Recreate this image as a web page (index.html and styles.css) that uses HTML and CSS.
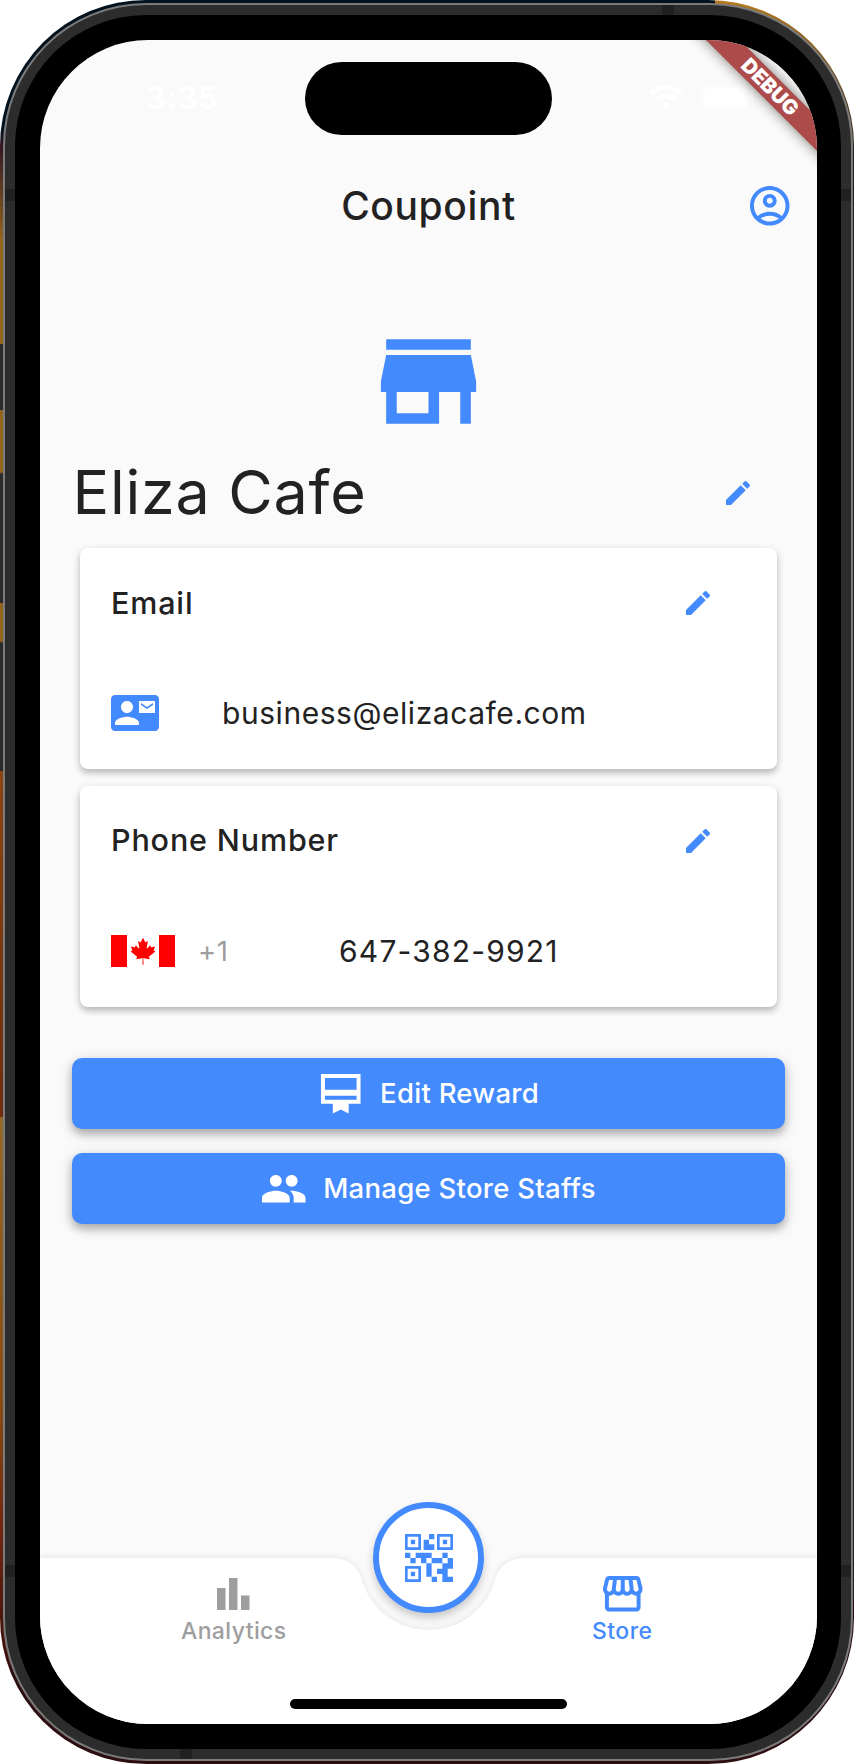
FILE: index.html
```html
<!DOCTYPE html>
<html lang="en">
<head>
<meta charset="utf-8">
<title>Coupoint</title>
<link rel="stylesheet" href="styles.css">
</head>
<body>
<div class="device">
  <div class="rim"><div class="band"><div class="bezel"><div class="screen">
    <header class="status">
      <span class="time">3:35</span>
      <span class="island"></span>
      <span class="signals">
        <svg class="wifi" viewBox="0 0 34 25"><path d="M2 8.500Q17-3.500 32 8.500M8 14.500Q17 7.500 26 14.500" fill="none" stroke="#fff" stroke-width="5"/><path d="M17 24l-5-5q5-4 10 0z" fill="#fff"/></svg>
        <svg class="battery" viewBox="0 0 54 24"><rect x="1" y="1" width="46" height="22" rx="7" fill="none" stroke="#fdfdfd" stroke-width="2"/><rect x="3" y="3" width="42" height="18" rx="5" fill="#fff"/><rect x="49" y="8" width="3" height="8" rx="1.500" fill="#fdfdfd"/></svg>
      </span>
    </header>
    <div class="debug">DEBUG</div>
    <div class="appbar">
      <h1>Coupoint</h1>
      <svg class="icon account" viewBox="0 0 24 24"><path fill-rule="evenodd" d="M12 2C6.480 2 2 6.480 2 12s4.480 10 10 10 10-4.480 10-10S17.520 2 12 2zM7.350 18.500C8.660 17.560 10.260 17 12 17s3.340.560 4.650 1.500C15.340 19.440 13.740 20 12 20s-3.340-.560-4.650-1.500zm10.790-1.380C16.450 15.800 14.320 15 12 15s-4.450.800-6.140 2.120C4.700 15.730 4 13.950 4 12c0-4.420 3.580-8 8-8s8 3.580 8 8c0 1.950-.700 3.730-1.860 5.120z"/><path fill-rule="evenodd" d="M12 6c-1.930 0-3.500 1.570-3.500 3.500S10.070 13 12 13s3.500-1.570 3.500-3.500S13.930 6 12 6zm0 5c-.830 0-1.500-.670-1.500-1.500S11.170 8 12 8s1.500.670 1.500 1.500S12.830 11 12 11z"/></svg>
    </div>
    <main class="content">
      <svg class="hero" viewBox="0 0 24 24"><path d="M20 4H4v2h16V4zm1 10v-2l-1-5H4l-1 5v2h1v6h10v-6h4v6h2v-6h1zm-9 4H6v-4h6v4z"/></svg>
      <div class="name-row">
        <h2>Eliza Cafe</h2>
        <svg class="pencil" viewBox="0 0 24 24"><path d="M3 17.250V21h3.750L17.810 9.940l-3.750-3.750L3 17.250zM20.710 7.040c.390-.390.390-1.020 0-1.410l-2.340-2.340c-.390-.390-1.020-.390-1.410 0l-1.830 1.830 3.750 3.750 1.830-1.830z"/></svg>
      </div>
      <section class="card">
        <div class="card-head">
          <h3>Email</h3>
          <svg class="pencil" viewBox="0 0 24 24"><path d="M3 17.250V21h3.750L17.810 9.940l-3.750-3.750L3 17.250zM20.710 7.040c.390-.390.390-1.020 0-1.410l-2.340-2.340c-.390-.390-1.020-.390-1.410 0l-1.830 1.830 3.750 3.750 1.830-1.830z"/></svg>
        </div>
        <div class="card-row">
          <svg class="contact" viewBox="0 0 24 24"><path d="M21 8V7l-3 2-3-2v1l3 2 3-2zm1-5H2C.900 3 0 3.900 0 5v14c0 1.100.900 2 2 2h20c1.100 0 1.990-.900 1.990-2L24 5c0-1.100-.900-2-2-2zM8 6c1.660 0 3 1.340 3 3s-1.340 3-3 3-3-1.340-3-3 1.340-3 3-3zm6 12H2v-1c0-2 4-3.100 6-3.100s6 1.100 6 3.100v1zm8-6h-8V6h8v6z"/></svg>
          <span class="value">business@elizacafe.com</span>
        </div>
      </section>
      <section class="card">
        <div class="card-head">
          <h3>Phone Number</h3>
          <svg class="pencil" viewBox="0 0 24 24"><path d="M3 17.250V21h3.750L17.810 9.940l-3.750-3.750L3 17.250zM20.710 7.040c.390-.390.390-1.020 0-1.410l-2.340-2.340c-.390-.390-1.020-.390-1.410 0l-1.830 1.830 3.750 3.750 1.830-1.830z"/></svg>
        </div>
        <div class="card-row">
          <svg class="flag" viewBox="0 0 9600 4800"><path fill="#fff" d="M0 0h9600v4800H0z"/><path fill="#f00" d="M0 0h2400v4800H0zM7200 0h2400v4800H7200z"/><path fill="#f00" transform="translate(4800 2400)" d="m-90 2030 45-863a95 95 0 0 0-111-98l-859 151 116-320a65 65 0 0 0-20-73l-941-762 212-99a65 65 0 0 0 34-79l-186-572 542 115a65 65 0 0 0 73-38l105-247 423 454a65 65 0 0 0 111-57l-204-1052 327 189a65 65 0 0 0 91-27l332-652 332 652a65 65 0 0 0 91 27l327-189-204 1052a65 65 0 0 0 111 57l423-454 105 247a65 65 0 0 0 73 38l542-115-186 572a65 65 0 0 0 34 79l212 99-941 762a65 65 0 0 0-20 73l116 320-859-151a95 95 0 0 0-111 98l45 863z"/></svg>
          <span class="code">+1</span>
          <span class="value phone">647-382-9921</span>
        </div>
      </section>
      <div class="actions">
        <button class="action"><svg class="icon" viewBox="0 0 24 24"><path d="M22 2H2v15h6v5l4-2 4 2v-5h6V2zm-2 13H4v-2h16v2zm0-5H4V4h16v6z"/></svg><span>Edit Reward</span></button>
        <button class="action"><svg class="icon" viewBox="0 0 24 24"><path d="M16 11c1.660 0 2.990-1.340 2.990-3S17.660 5 16 5c-1.660 0-3 1.340-3 3s1.340 3 3 3zm-8 0c1.660 0 2.990-1.340 2.990-3S9.660 5 8 5C6.340 5 5 6.340 5 8s1.340 3 3 3zm0 2c-2.330 0-7 1.170-7 3.500V19h14v-2.500c0-2.330-4.670-3.500-7-3.500zm8 0c-.290 0-.620.020-.970.050 1.160.840 1.970 1.970 1.970 3.450V19h6v-2.500c0-2.330-4.670-3.500-7-3.500z"/></svg><span>Manage Store Staffs</span></button>
      </div>
    </main>
    <nav class="nav">
      <svg class="nav-shape" viewBox="0 0 777 167"><path d="M0 0H290C308 0 317 8 321 19A69.500 69.500 0 0 0 456 19C460 8 469 0 487 0H777V167H0z"/></svg>
      <div class="tabs">
        <a class="tab analytics"><svg viewBox="0 0 33 32"><path d="M0 10h8.500v22H0zM12 0h8.500v32H12zM24 17.500h8.500V32H24z"/></svg><span>Analytics</span></a>
        <a class="tab store"><svg viewBox="0 0 24 24"><path d="M21.900 8.890l-1.050-4.370c-.220-.900-1-1.520-1.910-1.520H5.050c-.900 0-1.690.630-1.900 1.520L2.100 8.890c-.240 1.020-.020 2.060.620 2.880.080.110.190.190.280.290V19c0 1.100.900 2 2 2h14c1.100 0 2-.900 2-2v-6.940c.090-.090.200-.180.280-.280.640-.820.870-1.870.620-2.890zm-2.990-3.900l1.050 4.370c.100.420.010.840-.250 1.170-.140.180-.440.470-.940.470-.610 0-1.140-.490-1.210-1.140L16.980 5l1.930-.010zM13 5h1.960l.540 4.520c.050.390-.070.780-.330 1.070-.220.260-.540.410-.950.410-.670 0-1.220-.590-1.220-1.310V5zM8.490 9.520L9.040 5H11v4.690c0 .720-.550 1.310-1.290 1.310-.340 0-.650-.150-.890-.410-.250-.290-.370-.680-.330-1.070zm-4.450-.160L5.050 5h1.970l-.580 4.860c-.080.650-.600 1.140-1.210 1.140-.490 0-.800-.290-.930-.470-.270-.320-.360-.750-.260-1.170zM5 19v-6.030c.080.010.150.030.230.030.870 0 1.660-.360 2.240-.950.600.600 1.400.950 2.310.950.870 0 1.650-.360 2.230-.930.590.570 1.390.930 2.290.930.840 0 1.640-.350 2.240-.950.580.590 1.370.950 2.240.950.080 0 .150-.020.230-.030V19H5z"/></svg><span>Store</span></a>
      </div>
      <div class="fab"><svg viewBox="0 0 18 18"><path fill-rule="evenodd" d="M0 0h6v6H0zM1 1v4h4V1zM12 0h6v6h-6zM13 1v4h4V1zM0 12h6v6H0zM1 13v4h4v-4z"/><path d="M2.200 2.200h1.600v1.600H2.200zM14.200 2.200h1.600v1.600h-1.600zM2.200 14.200h1.600v1.600H2.200zM9 0h2v2H9zM7 2.200h2v1.600h2V6H7zM0 7h2v2H0zM2 9h2v2H2zM4 7h6v2h4v2h-4V9H8v2H6V9H4zM14 7h2v2h-2zM16 9h2v4h-2v2h-4v-2h2v-2h2zM8 11h2v5H8zM10 16h2v2h-2zM14 15h2v1h2v2h-4z"/></svg></div>
      <div class="home"></div>
    </nav>
  </div></div></div></div>
  <div class="seams"><i class="s1"></i><i class="s2"></i><i class="s3"></i><i class="s4"></i><i class="s5"></i><i class="s6"></i></div>
</div>
</body>
</html>
```
FILE: styles.css
```css
* { box-sizing: border-box; }
body { margin: 0; background: #fff; font-family: Inter, "Noto Sans", sans-serif; color: #222; }
h1, h2, h3 { margin: 0; font-weight: 450; line-height: 1; white-space: nowrap; }
svg { display: block; flex: none; fill: #448aff; }

/* phone frame, one nested ring per layer */
.device {
  position: relative; width: 854px; height: 1764px; padding: 3px 1px 3px 3px; border-radius: 146px; overflow: hidden;
  background:
    linear-gradient(#02121f, #02121f) 0 0 / 715px 4px no-repeat,
    linear-gradient(#b67a20, #1c1a18) 715px 0 / 139px 160px no-repeat,
    linear-gradient(90deg, transparent 10px, #2c0d10 10px) 0 1600px / 854px 164px no-repeat,
    linear-gradient(#1a1a1a, #1a1a1a) 844px 0 / 10px 1764px no-repeat,
    linear-gradient(#02121f 130px, #321824 145px, #92651f 240px, #92651f 344px, #2b2b2b 344px, #2b2b2b 410px, #92651f 410px, #92651f 472px, #2b2b2b 474px, #2b2b2b 603px, #92651f 603px, #92651f 641px, #2b2b2b 643px, #2b2b2b 771px, #8a4510 771px, #702c0e 1116px, #94692a 1118px, #8a4c12 1400px, #702610 1530px, #3b100d 1660px);
}
.rim { height: 100%; padding: 2px; border-radius: 143px; background: #7b7b7b; }
.band { height: 100%; padding: 10px; border-radius: 141px; background: #2c2c2c; }
.bezel { height: 100%; padding: 25px 24px 25px 25px; border-radius: 131px; background: #000; }
.screen { position: relative; display: flex; flex-direction: column; height: 1684px; border-radius: 108px; overflow: hidden; background: #fafafa; }
.seams i { position: absolute; width: 10px; height: 12px; background: #202020; }
.seams .s1 { left: 5px; top: 189px; }
.seams .s2 { right: 3px; top: 189px; }
.seams .s3 { left: 5px; top: 1565px; }
.seams .s4 { right: 3px; top: 1565px; }
.seams .s5 { left: 662px; top: 5px; width: 12px; height: 10px; }
.seams .s6 { left: 180px; top: 1749px; width: 12px; height: 10px; }

.status { display: grid; grid-template-columns: 265px 247px 1fr; height: 120px; padding-top: 22px; align-items: start; }
.time { padding: 17px 0 0 106px; font-size: 31px; line-height: 38px; font-weight: 600; letter-spacing: .9px; color: #fff; }
.island { height: 73px; border-radius: 37px; background: #000; }
.signals { display: flex; gap: 18px; padding: 23px 0 0 97px; }
.wifi { width: 34px; height: 25px; }
.battery { width: 54px; height: 24px; }
.debug {
  position: absolute; left: 580px; top: 35px; width: 300px; height: 23.500px; transform: rotate(45deg);
  background: #ad4b4b; box-shadow: 0 0 13px rgba(0,0,0,.5); color: #fff; font-size: 20.500px; font-weight: 900; line-height: 23px; text-align: center;
}

.appbar { display: grid; grid-template-columns: 1fr auto 1fr; align-items: center; height: 92px; padding: 0 24px; }
.appbar h1 { grid-column: 2; font-size: 39px; letter-spacing: .6px; padding-bottom: 1px; }
.icon { width: 47.500px; height: 47.500px; }
.account { justify-self: end; }

.content { flex: 1; display: flex; flex-direction: column; padding: 66px 32px 0 31.500px; }
.hero { width: 127px; height: 127px; align-self: center; }
.name-row { display: flex; align-items: center; justify-content: space-between; height: 95px; padding-right: 31px; margin-bottom: 8px; }
.name-row h2 { font-size: 61px; font-weight: 400; letter-spacing: .75px; padding-left: 1px; }
.pencil { width: 32px; height: 32px; }
.card { height: 221px; margin: 0 8px 16.500px; border-radius: 8px; background: #fff; box-shadow: 0 4px 6px rgba(0,0,0,.2), 0 2px 10px rgba(0,0,0,.1); }
.card-head { display: flex; align-items: center; justify-content: space-between; height: 110px; padding: 0 63px 0 31.500px; }
.card-head h3 { font-size: 30.500px; letter-spacing: .85px; }
.card-row { display: flex; align-items: center; height: 110px; padding-left: 31.500px; }
.contact { width: 48px; height: 48px; margin-right: 63px; }
.value { font-size: 30px; letter-spacing: .55px; white-space: nowrap; }
.phone { letter-spacing: 1.200px; }
.flag { width: 64px; height: 32px; margin-right: 23px; }
.code { width: 141px; font-size: 27.500px; letter-spacing: .6px; color: #9e9e9e; }
.actions { display: flex; flex-direction: column; gap: 24px; margin-top: 35px; }
.action { display: flex; align-items: center; justify-content: center; height: 71px; padding: 0; border: 0; border-radius: 10px; background: #448aff; color: #fff; font: 500 27.500px/1 Inter, sans-serif; letter-spacing: .28px; white-space: nowrap; box-shadow: 0 5px 8px rgba(0,0,0,.25), 0 3px 16px rgba(0,0,0,.13); }
.action svg { fill: #fff; margin-right: 16px; }
.action span { padding-right: 1px; }

.nav { position: relative; display: flex; flex-direction: column; align-items: center; height: 166.500px; }
.nav-shape { position: absolute; inset: 0; width: 777px; height: 167px; overflow: visible; fill: #fff; filter: drop-shadow(0 -1px 3px rgba(0,0,0,.08)); }
.tabs { position: relative; display: grid; grid-template-columns: 1fr 1fr; width: 777px; height: 141px; }
.tab { display: flex; flex-direction: column; align-items: center; padding-right: 1px; font-size: 23px; line-height: 28px; letter-spacing: .4px; color: #448aff; font-weight: 500; }
.tab svg { width: 47.500px; height: 47.500px; margin: 12px 0 0; }
.analytics { color: #9e9e9e; }
.analytics svg { width: 33px; height: 32px; margin: 20px 0 7.500px; fill: #9e9e9e; }
.fab { position: absolute; left: 333px; top: -55.500px; width: 111px; height: 111px; display: grid; place-items: center; border: 6px solid #448aff; border-radius: 50%; background: #fff; box-shadow: 0 5px 8px rgba(0,0,0,.2); }
.fab svg { width: 48px; height: 48px; }
.home { position: relative; width: 277px; height: 10px; border-radius: 5px; background: #000; }
```
